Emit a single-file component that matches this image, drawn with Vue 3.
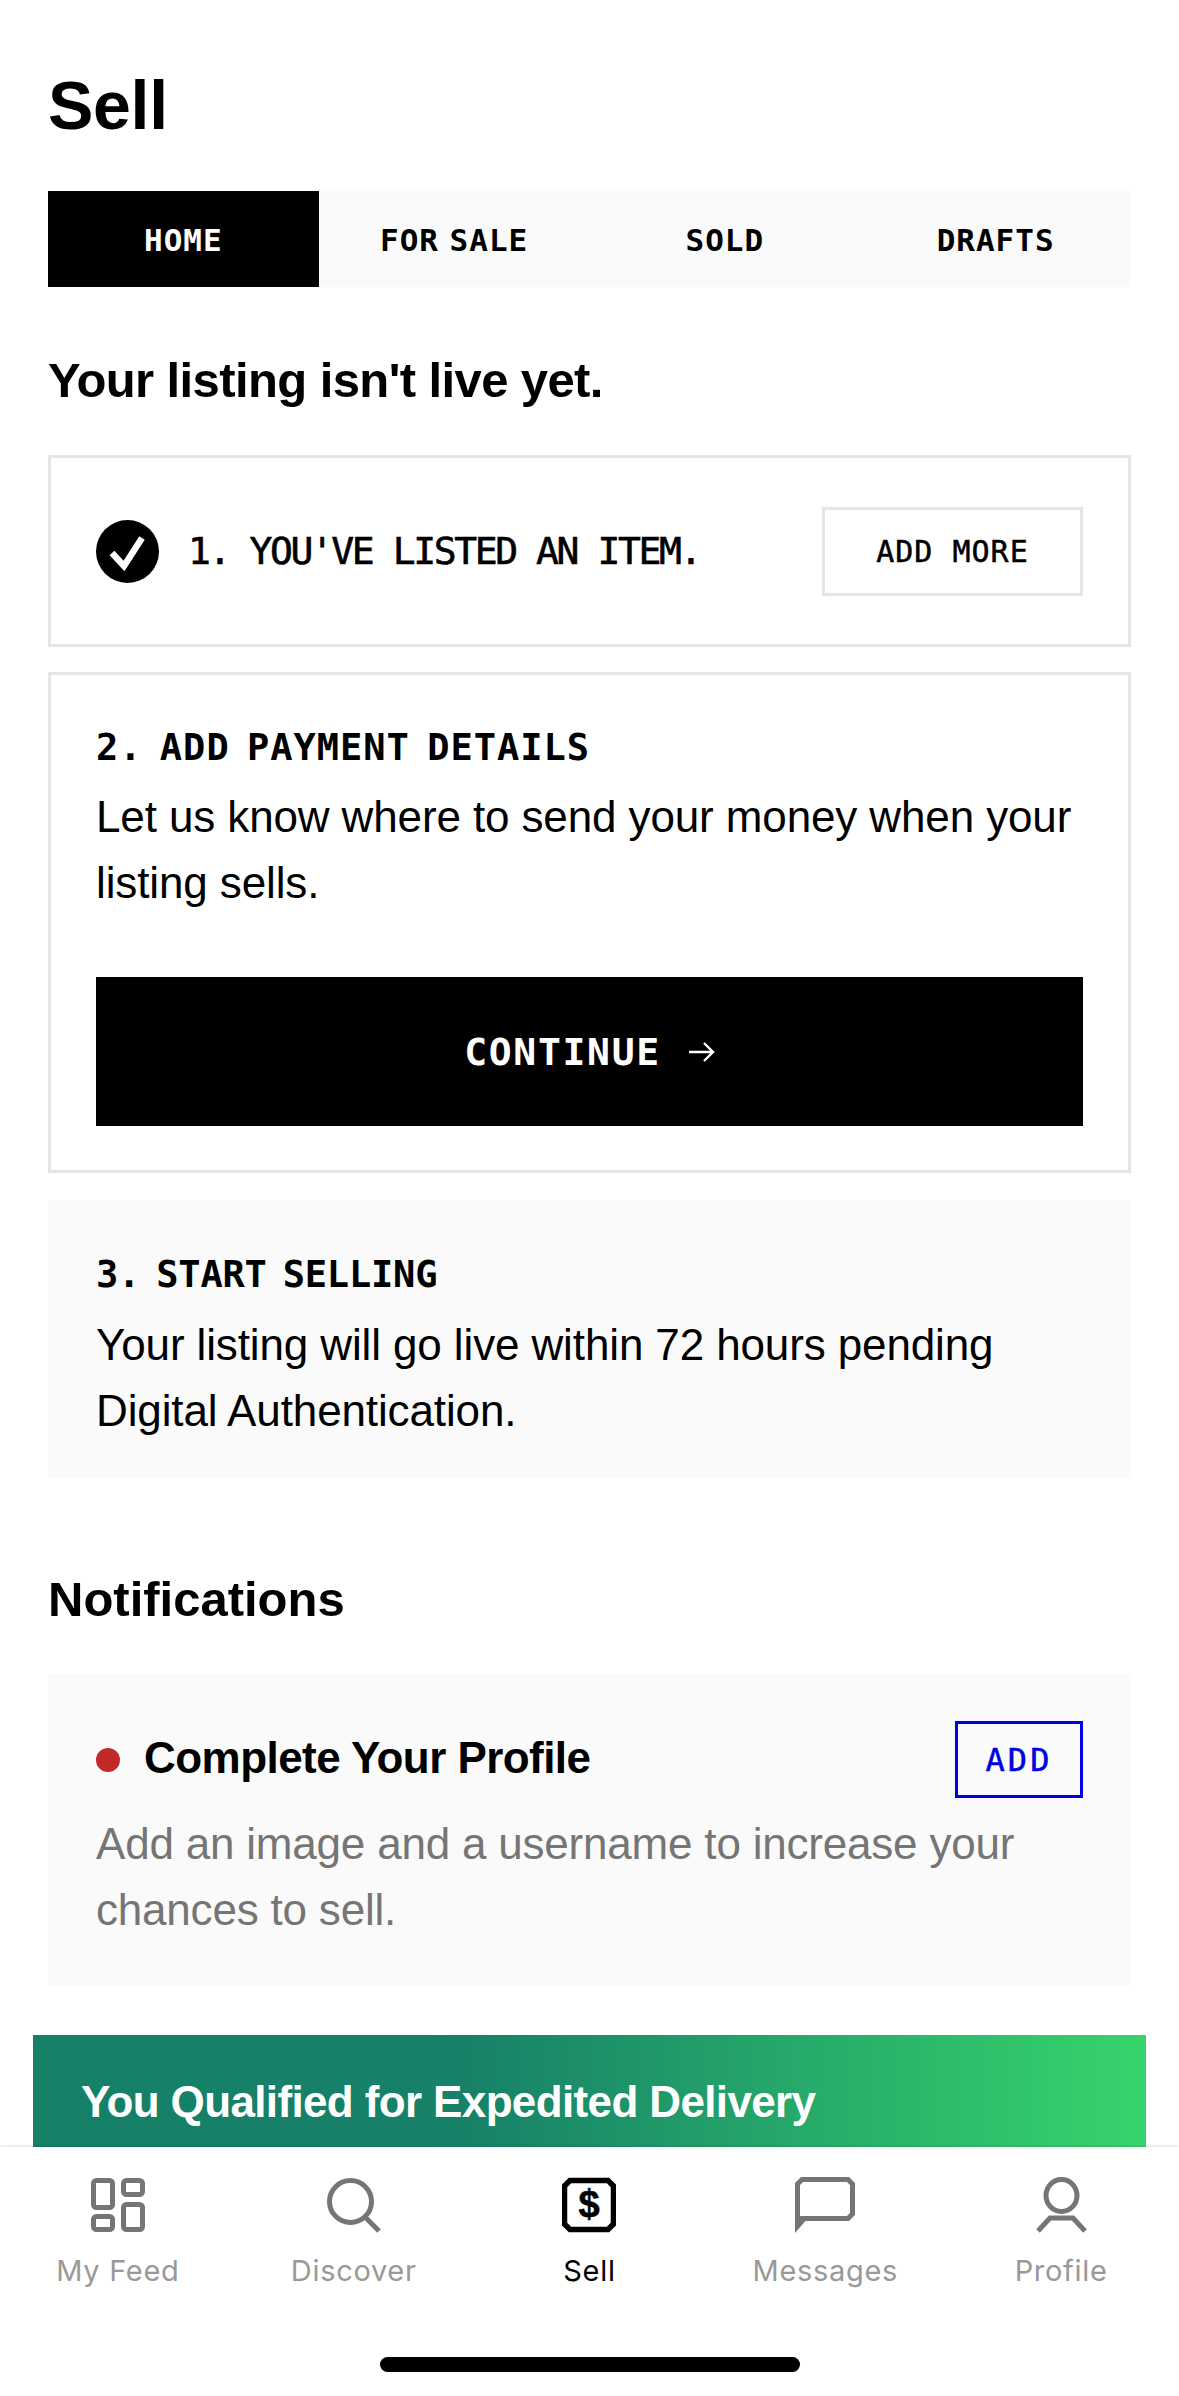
<script setup>
const tabs = ['HOME', 'FOR SALE', 'SOLD', 'DRAFTS']
const navLabels = ['My Feed', 'Discover', 'Sell', 'Messages', 'Profile']
</script>

<template>
  <div class="screen">
    <main class="content">
      <h1 class="title">Sell</h1>
      <div class="tabs">
        <div v-for="(tab, i) in tabs" :key="tab" class="tab" :class="{ active: i === 0 }">{{ tab }}</div>
      </div>
      <h2 class="heading">Your listing isn't live yet.</h2>

      <section class="card outlined row-card">
        <svg class="check" viewBox="0 0 63 63" width="63" height="63">
          <circle cx="31.5" cy="31.5" r="31.5" fill="#000" />
          <path d="M16 33L28 46L46 18" fill="none" stroke="#fff" stroke-width="6.5" />
        </svg>
        <span class="step-done">1. YOU'VE LISTED AN ITEM.</span>
        <span class="btn-more">ADD MORE</span>
      </section>

      <section class="card outlined step2">
        <div class="step-title">2. ADD PAYMENT DETAILS</div>
        <p class="body-text">Let us know where to send your money when your listing sells.</p>
        <div class="btn-continue">
          <span>CONTINUE</span>
          <svg viewBox="0 0 26 20" width="26" height="20">
            <path d="M0 10H24M15 1L24 10L15 19" fill="none" stroke="#fff" stroke-width="2.4" />
          </svg>
        </div>
      </section>

      <section class="card filled step3">
        <div class="step-title tight">3. START SELLING</div>
        <p class="body-text">Your listing will go live within 72 hours pending Digital Authentication.</p>
      </section>

      <h2 class="heading notif-heading">Notifications</h2>

      <section class="card filled notif">
        <div class="notif-top">
          <span class="dot"></span>
          <span class="notif-title">Complete Your Profile</span>
          <span class="btn-add">ADD</span>
        </div>
        <p class="body-text grey">Add an image and a username to increase your chances to sell.</p>
      </section>

      <section class="banner">You Qualified for Expedited Delivery</section>
    </main>

    <nav class="nav">
      <div class="nav-items">
        <div v-for="(label, i) in navLabels" :key="label" class="nav-item" :class="{ current: i === 2 }">
          <svg v-if="i === 0" viewBox="0 0 54 54" width="54" height="54">
            <g fill="none" stroke="#757575" stroke-width="5">
              <rect x="2.5" y="2.5" width="19" height="27" rx="3" />
              <rect x="32.5" y="2.5" width="19" height="14" rx="3" />
              <rect x="2.5" y="38.5" width="19" height="13" rx="3" />
              <rect x="32.5" y="26.5" width="19" height="25" rx="3" />
            </g>
          </svg>
          <svg v-else-if="i === 1" viewBox="0 0 54 54" width="54" height="54">
            <g fill="none" stroke="#757575" stroke-width="5">
              <circle cx="23.5" cy="23.5" r="21" />
              <path d="M37 38L52 53" />
            </g>
          </svg>
          <svg v-else-if="i === 2" viewBox="0 0 54 54" width="54" height="54">
            <path d="M8 2.5H46L51.5 8V46L46 51.5H8L2.5 46V8Z" fill="none" stroke="#000" stroke-width="5.5" />
            <text x="27" y="39" text-anchor="middle" class="dollar">$</text>
          </svg>
          <svg v-else-if="i === 3" viewBox="0 0 60 56" width="60" height="56">
            <path d="M7 2.5H53L57.5 7V37L53 41.5H2.5V7Z" fill="none" stroke="#757575" stroke-width="5" />
            <path d="M0 40H14L0 56Z" fill="#757575" />
          </svg>
          <svg v-else viewBox="0 0 51 56" width="51" height="56">
            <g fill="none" stroke="#757575" stroke-width="5">
              <ellipse cx="25.5" cy="18.5" rx="15.5" ry="16" />
              <path d="M2 54L14 41H37L49 54" />
            </g>
          </svg>
          <span class="nav-label">{{ label }}</span>
        </div>
      </div>
      <div class="home-bar"></div>
    </nav>
  </div>
</template>

<style scoped>
.screen {
  position: relative;
  width: 1179px;
  height: 2396px;
  overflow: hidden;
  background: #fff;
  color: #000;
  font-family: "Liberation Sans", Arial, sans-serif;
}
.content {
  padding: 65px 48px 0;
}
.title {
  margin: 0 0 46px;
  font-size: 68px;
  line-height: 80px;
  font-weight: 700;
  letter-spacing: -0.3px;
}
.tabs {
  display: grid;
  grid-template-columns: repeat(4, 1fr);
  height: 96px;
  background: #fafafa;
  font-family: "DejaVu Sans Mono", monospace;
  font-weight: 700;
  font-size: 31px;
  letter-spacing: 1px;
  word-spacing: -9px;
}
.tab {
  display: flex;
  align-items: center;
  justify-content: center;
  padding-top: 2px;
}
.tab.active {
  background: #000;
  color: #fff;
}
.heading {
  margin: 63px 0 0;
  font-size: 49px;
  line-height: 60px;
  font-weight: 700;
  letter-spacing: -0.6px;
}
.card {
  box-sizing: border-box;
}
.outlined {
  border: 3px solid #e5e5e5;
}
.filled {
  background: #fafafa;
}
.row-card {
  display: flex;
  align-items: center;
  height: 192px;
  margin-top: 45px;
  padding: 0 45px;
}
.check {
  flex: none;
  margin-right: 29px;
}
.step-done {
  flex: 1;
  font-family: "DejaVu Sans Mono", monospace;
  font-size: 38px;
  letter-spacing: -2.4px;
  -webkit-text-stroke: 0.6px #000;
}
.btn-more {
  box-sizing: border-box;
  display: flex;
  align-items: center;
  justify-content: center;
  width: 261px;
  height: 89px;
  border: 3px solid #e5e5e5;
  font-family: "DejaVu Sans Mono", monospace;
  font-size: 30px;
  letter-spacing: 1px;
  -webkit-text-stroke: 0.5px #000;
}
.step2 {
  height: 501px;
  margin-top: 25px;
  padding: 51px 45px 0;
}
.step2 .body-text {
  margin-top: 14px;
}
.step-title {
  font-family: "DejaVu Sans Mono", monospace;
  font-size: 37px;
  line-height: 44px;
  font-weight: 700;
  letter-spacing: 1px;
  word-spacing: -6px;
}
.step-title.tight {
  letter-spacing: -0.2px;
}
.body-text {
  margin: 15px 0 0;
  font-size: 44px;
  line-height: 66px;
  letter-spacing: -0.12px;
}
.body-text.grey {
  margin-top: 13px;
  color: #757575;
  letter-spacing: -0.2px;
}
.btn-continue {
  display: flex;
  align-items: center;
  justify-content: center;
  gap: 28px;
  height: 149px;
  margin-top: 61px;
  background: #000;
  color: #fff;
  font-family: "DejaVu Sans Mono", monospace;
  font-size: 38px;
  font-weight: 700;
  letter-spacing: 1.7px;
}
.step3 {
  height: 278px;
  margin-top: 27px;
  padding: 53px 48px 0;
}
.notif-heading {
  margin-top: 91px;
  letter-spacing: 0;
}
.notif {
  height: 312px;
  margin-top: 45px;
  padding: 47px 48px 0;
}
.notif-top {
  display: flex;
  align-items: center;
  height: 77px;
}
.dot {
  width: 24px;
  height: 24px;
  border-radius: 50%;
  background: #c22a2a;
  margin-right: 24px;
}
.notif-title {
  flex: 1;
  padding-bottom: 4px;
  font-size: 44px;
  font-weight: 700;
  letter-spacing: -0.55px;
}
.btn-add {
  box-sizing: border-box;
  display: flex;
  align-items: center;
  justify-content: center;
  width: 128px;
  height: 77px;
  border: 3px solid #0000e0;
  color: #0000e0;
  font-family: "DejaVu Sans Mono", monospace;
  font-size: 32px;
  letter-spacing: 3px;
  -webkit-text-stroke: 0.5px #0000e0;
}
.banner {
  box-sizing: border-box;
  height: 220px;
  margin: 49px -15px 0;
  padding: 40px 48px 0;
  background: linear-gradient(90deg, #157f68 0%, #178268 40%, #37d46c 100%);
  color: #fff;
  font-size: 44px;
  line-height: 54px;
  font-weight: 700;
  letter-spacing: -0.63px;
}
.nav {
  position: absolute;
  left: 0;
  right: 0;
  bottom: 0;
  height: 249px;
  background: #fff;
  box-shadow: 0 -1px 2px rgba(0, 0, 0, 0.12);
}
.nav-items {
  display: grid;
  grid-template-columns: repeat(5, 1fr);
  padding-top: 30px;
}
.nav-item {
  display: flex;
  flex-direction: column;
  align-items: center;
  height: 112px;
  color: #999;
}
.nav-item svg {
  display: block;
  height: 56px;
}
.nav-item.current {
  color: #000;
}
.nav-label {
  margin-top: 20px;
  font-family: Inter, sans-serif;
  font-size: 29px;
  line-height: 36px;
  letter-spacing: 0.7px;
}
.dollar {
  font-family: "Liberation Sans", sans-serif;
  font-size: 38px;
  font-weight: 700;
  fill: #000;
  stroke: #000;
  stroke-width: 0.6px;
}
.home-bar {
  width: 420px;
  height: 15px;
  margin: 68px auto 0;
  border-radius: 8px;
  background: #000;
}
</style>

<style>
html, body { margin: 0; background: #fff; }
</style>
